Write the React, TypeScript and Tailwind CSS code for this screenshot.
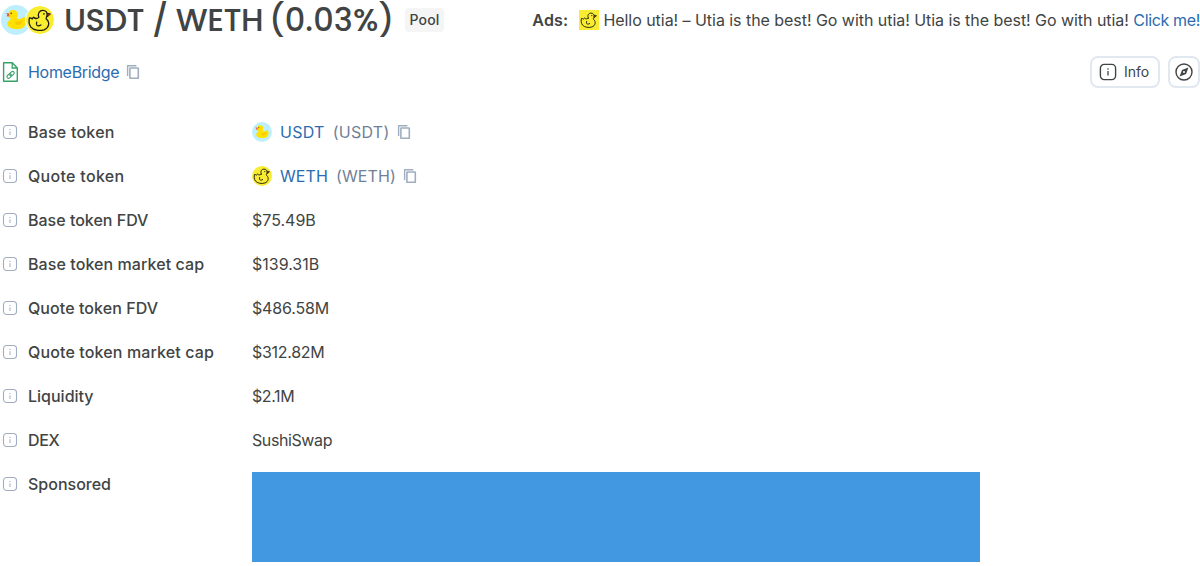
import React from 'react';

function BlueDuck({ className }: { className: string }) {
  return (
    <svg viewBox="0 0 30 30" className={className}>
      <circle cx="15" cy="15" r="15" fill="#beeffe" />
      <path d="M7.3 10.5 C7.2 6.2 9.5 4.8 12.2 5 C15.7 5.1 17.7 8 16.6 10.8 C16 12.2 15.8 13 16.6 13.7 C19 14.4 21.3 13.7 23.1 11.6 C26 15 25.3 21.8 21 23.3 C17.3 24.6 12 24.4 9.2 22.8 C4.8 20.2 5.8 16.4 10.2 14.1 C8.7 13.3 7.5 12.2 7.3 10.5Z" fill="#ffe000" />
      <path d="M13.5 17 C16.7 17.2 19 16.6 21.2 14.8 C22 18.6 18.5 21 14.9 19.5Z" fill="#f6c900" />
      <path d="M8 8.6 L5 8 L6.4 9.8 L5.4 11.2 L8.4 11.6Z" fill="#f2543a" />
      <circle cx="10.2" cy="8.4" r="0.8" fill="#5c4a20" />
    </svg>
  );
}

function LineDuck({ className, square = false }: { className: string; square?: boolean }) {
  return (
    <svg viewBox="0 0 30 30" className={className}>
      {square ? <rect width="30" height="30" fill="#f9ed32" /> : <circle cx="15" cy="15" r="15" fill="#f9ed32" />}
      <g fill="none" stroke="#1c1b12" strokeWidth="1.4" strokeLinecap="round" strokeLinejoin="round">
        <path d="M13.8 12.2 C12.2 8.2 14.2 4.7 18 4.7 C21.4 4.7 23.3 7.3 22.6 10.3 C22.1 12.1 21 12.9 21.8 14 C26.2 18 24.4 23.7 19.3 25.5 C14.5 27 8.2 26 5.3 22.6 C3.1 19.6 2.9 15.7 3.7 12.7 C4.9 12.6 5.9 13 6.6 13.9 C7 13 7.4 12.4 8.1 12 C9.8 13.7 11.8 14 13.8 12.2Z" />
        <path d="M11.5 17.2 C10.2 21 12.4 22.3 16 20.4" />
      </g>
      <path d="M22.8 7.7 L26.3 8.6 L22.9 11.6Z" fill="#b52822" stroke="#1c1b12" strokeWidth="1" />
      <circle cx="19.2" cy="8.4" r="0.9" fill="#1c1b12" />
    </svg>
  );
}

function InfoIcon({ className }: { className: string }) {
  return (
    <svg viewBox="0 0 20 20" fill="none" className={className}>
      <rect x="2.4" y="2.4" width="15.2" height="15.2" rx="3.8" stroke="currentColor" strokeWidth="1.4" />
      <path d="M10 9.1V13.6" stroke="currentColor" strokeWidth="1.3" />
      <circle cx="10" cy="7" r="0.8" fill="currentColor" />
    </svg>
  );
}

function HintIcon() {
  return (
    <svg viewBox="0 0 20 20" fill="none" className="mr-2 size-5 shrink-0 text-[#a0aec0]">
      <rect x="3.5" y="3.5" width="13" height="13" rx="3.2" stroke="currentColor" strokeWidth="1.1" />
      <path d="M10 9.2V13" stroke="currentColor" strokeWidth="1" />
      <circle cx="10" cy="7.4" r="0.7" fill="currentColor" />
    </svg>
  );
}

function CopyIcon() {
  return (
    <svg viewBox="0 0 20 20" fill="none" className="size-5 shrink-0 text-[#a0aec0]">
      <path d="M4.6 14V3.7H13.4" stroke="currentColor" strokeWidth="1.4" strokeLinejoin="round" />
      <rect x="6.9" y="6" width="8.4" height="10.3" rx="0.4" stroke="currentColor" strokeWidth="1.6" />
    </svg>
  );
}

function ContractIcon() {
  return (
    <svg viewBox="0 0 20 20" fill="none" className="size-5 shrink-0 text-[#38a169]">
      <path d="M3.6 .8H12.3L17.3 5.9V19.2H3.6Z" stroke="currentColor" strokeWidth="1.4" strokeLinejoin="round" />
      <path d="M12.2 1V6H17.2" stroke="currentColor" strokeWidth="1.3" />
      <g stroke="currentColor" strokeWidth="1.1" transform="rotate(-42 10.6 12.8)">
        <rect x="6.2" y="11.2" width="5" height="3.2" rx="1.6" />
        <rect x="9.9" y="11.2" width="5" height="3.2" rx="1.6" />
      </g>
    </svg>
  );
}

function CompassIcon() {
  return (
    <svg viewBox="0 0 20 20" fill="none" className="size-5">
      <circle cx="10" cy="10" r="8" stroke="currentColor" strokeWidth="1.4" />
      <path fillRule="evenodd" d="M14.4 5.6L12.1 11.9L5.6 14.4L8 8.1Z M10 9A1 1 0 1 0 10 11A1 1 0 1 0 10 9Z" fill="currentColor" />
    </svg>
  );
}

function Row({ label, labelClass = '', children }: { label: string; labelClass?: string; children: React.ReactNode }) {
  return (
    <div className="flex items-start">
      <div className="flex h-6 w-[252px] shrink-0 items-center">
        <HintIcon />
        <span className={`font-medium ${labelClass}`}>{label}</span>
      </div>
      {children}
    </div>
  );
}

function Token({ icon, symbol, tracking }: { icon: React.ReactNode; symbol: string; tracking: string }) {
  return (
    <div className={`flex h-6 items-center ${tracking}`}>
      {icon}
      <a className="ml-2 text-[#2b6cb0]">{symbol}</a>
      <span className="mr-1 ml-2 text-[#718096]">({symbol})</span>
      <CopyIcon />
    </div>
  );
}

const stats = [
  { label: 'Base token FDV', labelClass: '', value: '$75.49B', valueClass: '' },
  { label: 'Base token market cap', labelClass: 'tracking-[0.08px]', value: '$139.31B', valueClass: '' },
  { label: 'Quote token FDV', labelClass: 'tracking-[0.07px]', value: '$486.58M', valueClass: 'tracking-[-0.15px]' },
  { label: 'Quote token market cap', labelClass: 'tracking-[0.13px]', value: '$312.82M', valueClass: 'tracking-[-0.3px]' },
  { label: 'Liquidity', labelClass: '', value: '$2.1M', valueClass: 'tracking-[-0.4px]' },
  { label: 'DEX', labelClass: 'tracking-[-0.3px]', value: 'SushiSwap', valueClass: 'tracking-[-0.4px]' },
];

export default function App() {
  return (
    <div className="w-full bg-white font-['Inter',sans-serif] text-base leading-6 text-[#414444]">
      <header className="flex h-10 items-center">
        <BlueDuck className="ml-px size-[30px] shrink-0" />
        <LineDuck className="relative -ml-[6px] size-[30px] shrink-0 rounded-full border border-white bg-white" />
        <h1 className="ml-[9px] w-[333px] shrink-0 font-['Poppins','Inter',sans-serif] text-[32px] leading-10 font-medium tracking-[-0.5px] whitespace-nowrap">
          USDT / WETH <span className="-ml-[2px] tracking-[0.1px]">(0.03%)</span>
        </h1>
        <span className="ml-2 flex h-6 w-[39px] items-center justify-center rounded-sm bg-[#f5f5f5] text-sm font-medium tracking-[0.2px]">Pool</span>
        <div className="ml-auto flex items-center whitespace-nowrap">
          <strong className="mr-[11px] font-semibold tracking-[0.2px]">Ads:</strong>
          <LineDuck square className="mr-1 size-5" />
          <span className="tracking-[-0.045px]">
            Hello utia! – Utia is the best! Go with utia! Utia is the best! Go with utia!{' '}
            <a className="tracking-[-0.35px] text-[#2b6cb0]">Click me!</a>
          </span>
        </div>
      </header>
      <div className="mt-4 flex h-8 items-center">
        <ContractIcon />
        <a className="mr-1 ml-2 tracking-[-0.3px] text-[#2b6cb0]">HomeBridge</a>
        <CopyIcon />
        <button className="ml-auto flex h-8 w-[70px] items-center rounded-lg border-2 border-[#e2e8f0] pl-1.5 text-sm">
          <InfoIcon className="mr-1.5 size-5" />
          Info
        </button>
        <button className="ml-2 flex size-8 items-center justify-center rounded-lg border-2 border-[#e2e8f0]">
          <CompassIcon />
        </button>
      </div>
      <main className="mt-8 flex flex-col gap-5">
        <Row label="Base token" labelClass="tracking-[0.22px]">
          <Token icon={<BlueDuck className="size-5" />} symbol="USDT" tracking="tracking-[0.27px]" />
        </Row>
        <Row label="Quote token" labelClass="tracking-[0.3px]">
          <Token icon={<LineDuck className="size-5" />} symbol="WETH" tracking="tracking-[0.1px]" />
        </Row>
        {stats.map(({ label, labelClass, value, valueClass }) => (
          <Row key={label} label={label} labelClass={labelClass}>
            <span className={valueClass}>{value}</span>
          </Row>
        ))}
        <Row label="Sponsored">
          <div className="h-[90px] w-[728px] bg-[#4299e1]" />
        </Row>
      </main>
    </div>
  );
}
